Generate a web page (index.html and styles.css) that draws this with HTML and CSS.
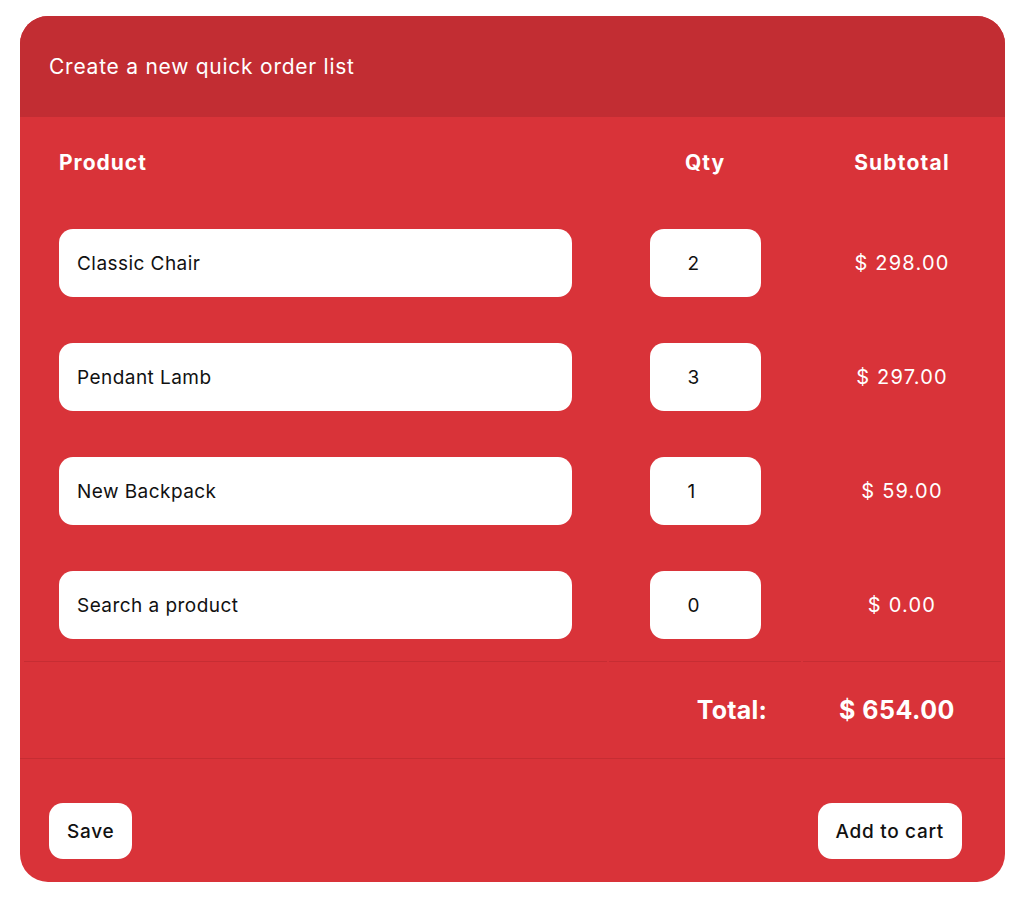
FILE: index.html
```html
<!DOCTYPE html>
<html lang="en">
<head>
<meta charset="utf-8">
<title>Quick order list</title>
<link rel="stylesheet" href="styles.css">
</head>
<body>
<div class="card">
  <div class="card-header">Create a new quick order list</div>
  <table class="order">
    <colgroup>
      <col class="c-product">
      <col class="c-qty">
      <col class="c-sub">
    </colgroup>
    <thead>
      <tr>
        <th class="col-product">Product</th>
        <th class="col-qty">Qty</th>
        <th class="col-sub">Subtotal</th>
      </tr>
    </thead>
    <tbody>
      <tr>
        <td class="col-product"><div class="field field-product">Classic Chair</div></td>
        <td class="col-qty"><div class="field field-qty">2</div></td>
        <td class="col-sub">$ 298.00</td>
      </tr>
      <tr>
        <td class="col-product"><div class="field field-product">Pendant Lamb</div></td>
        <td class="col-qty"><div class="field field-qty">3</div></td>
        <td class="col-sub">$ 297.00</td>
      </tr>
      <tr>
        <td class="col-product"><div class="field field-product">New Backpack</div></td>
        <td class="col-qty"><div class="field field-qty">1</div></td>
        <td class="col-sub">$ 59.00</td>
      </tr>
      <tr class="last">
        <td class="col-product"><div class="field field-product">Search a product</div></td>
        <td class="col-qty"><div class="field field-qty">0</div></td>
        <td class="col-sub">$ 0.00</td>
      </tr>
    </tbody>
    <tfoot>
      <tr>
        <td class="col-product"></td>
        <td class="total-label">Total:</td>
        <td class="total-value">$ 654.00</td>
      </tr>
    </tfoot>
  </table>
  <div class="card-footer">
    <button class="btn">Save</button>
    <button class="btn">Add to cart</button>
  </div>
</div>
</body>
</html>
```

FILE: styles.css
```css
html, body {
  margin: 0;
  padding: 0;
  background: #ffffff;
}
body {
  padding: 16px 19px 25px 20px;
  font-family: "Inter", "DejaVu Sans", sans-serif;
}
.card {
  width: 985px;
  background: #d93339;
  border-radius: 28px;
  overflow: hidden;
  color: #ffffff;
}
.card-header {
  background: #c22d33;
  height: 101px;
  box-sizing: border-box;
  padding-left: 29px;
  display: flex;
  align-items: center;
  font-size: 21px;
  letter-spacing: 0.75px;
  font-weight: 400;
}
.order {
  border-collapse: separate;
  border-spacing: 2px;
  margin-left: 2px;
  width: 981px;
  table-layout: fixed;
}
.c-product { width: 583px; }
.c-qty { width: 192px; }
.c-sub { width: 198px; }
.order th,
.order td {
  box-sizing: border-box;
}
.order th {
  height: 86px;
  padding: 0;
  font-size: 21px;
  font-weight: 700;
  letter-spacing: 1px;
}
.order th.col-product {
  text-align: left;
  padding-left: 35px;
}
.col-qty { text-align: center; }
.col-sub { text-align: center; }
.order th.col-sub { letter-spacing: 1.2px; }
.order tbody td {
  padding: 22px 0;
  height: 112px;
  font-size: 20px;
  letter-spacing: 1.2px;
}
.order tbody td.col-product {
  padding-left: 35px;
  padding-right: 35px;
}
.order tbody tr.last td {
  border-bottom: 1px solid #c62d33;
  height: 113px;
}
.field {
  background: #ffffff;
  color: #111111;
  height: 68px;
  border-radius: 14px;
  display: flex;
  align-items: center;
  box-sizing: border-box;
  font-size: 19px;
  letter-spacing: 0.45px;
}
.field-product {
  padding-left: 18px;
}
.field-qty {
  width: 111px;
  margin: 0 auto;
  padding-left: 38px;
  text-align: left;
}
.order tfoot td {
  height: 92px;
  padding: 0;
  font-weight: 700;
  font-size: 25px;
}
.order tfoot td.total-label {
  text-align: right;
  padding-right: 34px;
  letter-spacing: 0.2px;
}
.order tfoot td.total-value {
  text-align: center;
  padding-right: 10px;
  letter-spacing: 0.5px;
}
.card-footer {
  border-top: 1px solid #c62d33;
  display: flex;
  justify-content: space-between;
  padding: 44px 43px 23px 29px;
}
.btn {
  font-family: "Inter", "DejaVu Sans", sans-serif;
  background: #ffffff;
  color: #111111;
  border: none;
  border-radius: 14px;
  height: 56px;
  padding: 0 18px;
  font-size: 19px;
  font-weight: 500;
  letter-spacing: 0.7px;
}
```
